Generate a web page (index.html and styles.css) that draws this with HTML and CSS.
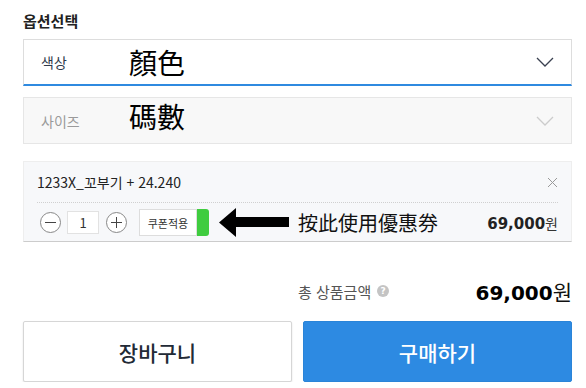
FILE: index.html
```html
<!doctype html>
<html lang="ko">
    <head>
        <meta charset="UTF-8" />
        <meta name="viewport" content="width=device-width, initial-scale=1.0" />
        <title>옵션선택</title>
        <link rel="stylesheet" href="styles.css">
    </head>
    <body>
        <div class="option-wrap">
            <h4 class="title">옵션선택</h4>

            <div class="select active">
                <span class="select-label">색상</span>
                <span class="note">顏色</span>
                <svg class="chevron" width="18" height="10" viewBox="0 0 18 10">
                    <polyline points="1,1 9,9 17,1" />
                </svg>
            </div>

            <div class="select disabled">
                <span class="select-label">사이즈</span>
                <span class="note note-up">碼數</span>
                <svg class="chevron" width="18" height="10" viewBox="0 0 18 10">
                    <polyline points="1,1 9,9 17,1" />
                </svg>
            </div>

            <div class="picked">
                <div class="picked-head">
                    <span class="picked-name">1233X_꼬부기 + 24.240</span>
                    <svg class="close" width="11" height="11" viewBox="0 0 11 11">
                        <path d="M1 1 L10 10 M10 1 L1 10" />
                    </svg>
                </div>
                <div class="picked-row">
                    <button type="button" class="round">
                        <svg width="11" height="11" viewBox="0 0 11 11"><path d="M0 5.5 H11" /></svg>
                    </button>
                    <input class="qty" type="text" value="1" />
                    <button type="button" class="round">
                        <svg width="11" height="11" viewBox="0 0 11 11"><path d="M0 5.5 H11 M5.5 0 V11" /></svg>
                    </button>
                    <button type="button" class="coupon">쿠폰적용</button>
                    <span class="coupon-mark"></span>
                    <svg class="arrow" width="70" height="29" viewBox="0 0 70 29">
                        <polygon points="0,14.5 17,0 17,9 70,9 70,19 17,19 17,29" />
                    </svg>
                    <span class="hint">按此使用優惠券</span>
                    <span class="row-price"><b>69,000</b>원</span>
                </div>
            </div>

            <div class="total">
                <div></div>
                <div class="total-inner">
                    <span class="total-label">총 상품금액</span>
                    <span class="help">?</span>
                    <span class="total-price"><b>69,000</b>원</span>
                </div>
            </div>

            <div class="actions">
                <button type="button" class="btn cart">장바구니</button>
                <button type="button" class="btn buy">구매하기</button>
            </div>
        </div>
    </body>
</html>
```

FILE: styles.css
```css
body {
    margin: 0;
    padding: 0;
    background-color: #ffffff;
    color: #333333;
    font-family: "Noto Sans CJK KR", "Noto Sans", sans-serif;
}
.option-wrap {
    width: 549px;
    margin-left: 23px;
    padding-top: 10px;
}
.title {
    margin: 0 0 8px;
    font-size: 15px;
    line-height: 21px;
    font-weight: bold;
    color: #222222;
}
.select {
    display: flex;
    align-items: center;
    height: 47px;
    box-sizing: border-box;
    padding: 0 17px;
    border: 1px solid #dddddd;
    margin-bottom: 11px;
}
.select.active {
    border-bottom: 2px solid #2f8ae0;
}
.select.disabled {
    background-color: #f8f8f8;
    border-color: #e6e6e6;
    margin-bottom: 17px;
}
.select-label {
    width: 88px;
    font-size: 14px;
    color: #2f3a4a;
}
.disabled .select-label {
    color: #9a9a9a;
}
.note {
    font-family: "Noto Sans CJK TC", sans-serif;
    font-size: 28px;
    line-height: 32px;
    color: #000000;
}
.note-up {
    align-self: flex-start;
    margin-top: 2px;
}
.chevron {
    margin-left: auto;
    fill: none;
    stroke: #3a4150;
    stroke-width: 1.3;
}
.disabled .chevron {
    stroke: #cccccc;
}
.picked {
    background-color: #f7f8fa;
    border: 1px solid #eeeeee;
    border-bottom-color: #cccccc;
    padding: 0 13px;
}
.picked-head {
    display: flex;
    align-items: center;
    justify-content: space-between;
    height: 40px;
    border-bottom: 1px dotted #d0d0d0;
}
.picked-name {
    font-size: 14px;
    color: #222222;
}
.close {
    fill: none;
    stroke: #999999;
    stroke-width: 1;
}
.picked-row {
    display: flex;
    align-items: center;
    height: 27px;
    padding: 6px 0 5px;
}
.round {
    width: 21px;
    height: 21px;
    border: 1px solid #888888;
    border-radius: 50%;
    background-color: #ffffff;
    padding: 0;
    display: flex;
    align-items: center;
    justify-content: center;
    margin-left: 3px;
}
.round svg {
    stroke: #444444;
    stroke-width: 1;
}
.round + .qty {
    margin-left: 6px;
}
.qty {
    width: 32px;
    height: 23px;
    box-sizing: border-box;
    border: 1px solid #e2e2e2;
    text-align: center;
    font-family: "Noto Sans CJK KR", sans-serif;
    font-size: 13px;
    color: #333333;
    padding: 0;
    margin-right: 4px;
}
.coupon {
    margin-left: 12px;
    width: 58px;
    height: 27px;
    box-sizing: border-box;
    border: 1px solid #dddddd;
    background-color: #ffffff;
    font-family: "Noto Sans CJK KR", sans-serif;
    font-size: 11px;
    color: #333333;
    padding: 0;
}
.coupon-mark {
    width: 12px;
    height: 27px;
    background-color: #3fcc3f;
    border-radius: 0 3px 3px 0;
}
.arrow {
    margin-left: 10px;
    fill: #000000;
}
.hint {
    margin-left: 9px;
    font-family: "Noto Sans CJK TC", sans-serif;
    font-size: 20px;
    color: #111111;
}
.row-price {
    margin-left: auto;
    font-size: 14px;
    color: #333333;
}
.row-price b {
    font-family: "DejaVu Sans", sans-serif;
    font-size: 15px;
    color: #222222;
}
.total {
    display: grid;
    grid-template-columns: 270px 1fr;
    column-gap: 5px;
    margin-top: 34px;
    height: 28px;
    align-items: center;
}
.total-inner {
    display: flex;
    align-items: center;
}
.total-label {
    font-size: 15px;
    color: #555555;
}
.help {
    width: 12px;
    height: 12px;
    margin-left: 6px;
    border-radius: 50%;
    background-color: #c4c4c4;
    color: #ffffff;
    font-family: "DejaVu Sans", sans-serif;
    font-size: 9px;
    font-weight: bold;
    line-height: 12px;
    text-align: center;
}
.total-price {
    margin-left: auto;
    font-size: 21px;
    color: #111111;
}
.total-price b {
    font-family: "DejaVu Sans", sans-serif;
    font-size: 20px;
    color: #000000;
}
.actions {
    display: grid;
    grid-template-columns: 1fr 1fr;
    column-gap: 11px;
    margin-top: 17px;
}
.btn {
    height: 61px;
    font-family: "Noto Sans CJK KR", sans-serif;
    font-size: 21px;
    font-weight: 500;
    border-radius: 2px;
    cursor: pointer;
}
.cart {
    background-color: #ffffff;
    color: #222a36;
    border: 1px solid #d6d6d6;
    box-shadow: 0 1px 2px rgba(0, 0, 0, 0.12);
}
.buy {
    background-color: #2d8ae2;
    color: #ffffff;
    border: 1px solid #2a84d8;
}
```
